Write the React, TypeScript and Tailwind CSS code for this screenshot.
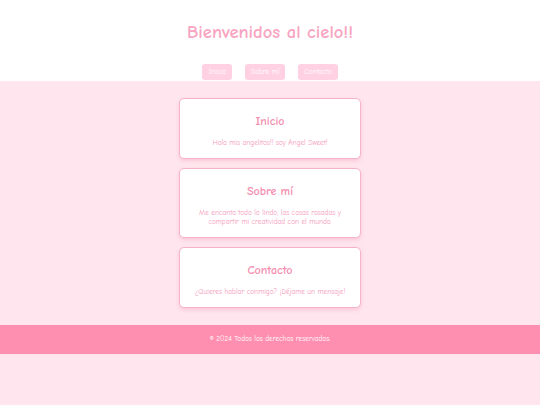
import React from "react";

const font = { fontFamily: '"Comic Sans MS", "Comic Neue", "DejaVu Sans", sans-serif' };

function Card({ title, children }: { title: string; children: React.ReactNode }) {
  return (
    <section className="w-[182px] rounded-[5px] border-[1.5px] border-[#f6b3cb] bg-white px-3 pt-[15px] pb-[10.5px] text-center shadow-[0_2px_4px_rgba(240,140,175,0.35)]">
      <h2 className="text-[12px] leading-[14px] font-bold text-[#f48fb1]">{title}</h2>
      <p className="mt-[10px] text-[7.3px] leading-[9.3px] text-[#f59abb]">{children}</p>
    </section>
  );
}

export default function App() {
  return (
    <div className="min-h-[405px] bg-[#ffe6ee]" style={font}>
      <header className="flex h-[81px] flex-col items-center bg-white pt-[19px]">
        <h1 className="text-[18.5px] leading-[26px] font-bold text-[#f8a5c2]">Bienvenidos al cielo!!</h1>
        <nav className="mt-[19px] flex gap-[13px]">
          <span className="flex h-[16px] items-center rounded-[3px] bg-[#ffd1e2] px-[6px] text-[7.3px] text-white">Inicio</span>
          <span className="flex h-[16px] items-center rounded-[3px] bg-[#ffd1e2] px-[6px] text-[7.3px] text-white">Sobre mí</span>
          <span className="flex h-[16px] items-center rounded-[3px] bg-[#ffd1e2] px-[6px] text-[7.3px] text-white">Contacto</span>
        </nav>
      </header>
      <main className="flex flex-col items-center gap-[9px] pt-[17px] pb-[17px]">
        <Card title="Inicio">Hola mis angelitos!! soy Angel Sweet!</Card>
        <Card title="Sobre mí">Me encanta todo lo lindo, las cosas rosadas y compartir mi creatividad con el mundo.</Card>
        <Card title="Contacto">¿Quieres hablar conmigo? ¡Déjame un mensaje!</Card>
      </main>
      <footer className="flex h-[29px] items-center justify-center bg-[#ff8fb0] text-[7.3px] text-white">
        © 2024 Todos los derechos reservados.
      </footer>
    </div>
  );
}
